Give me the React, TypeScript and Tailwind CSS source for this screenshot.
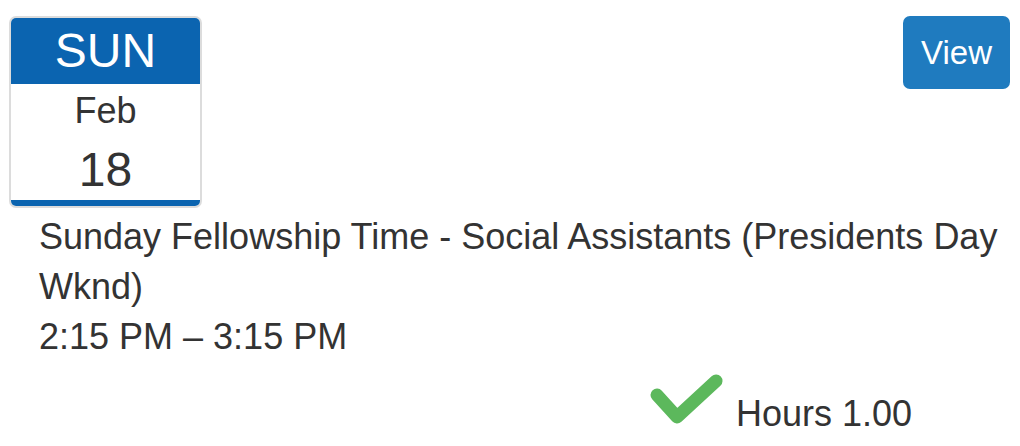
export default function App() {
  return (
    <div
      className="w-[1020px] h-[446px] bg-white text-[#333] overflow-hidden"
      style={{ fontFamily: '"Liberation Sans", Arial, sans-serif' }}
    >
      <div className="flex justify-between items-start pt-[16px] pl-[9px] pr-[10px]">
        <div className="w-[193px] h-[192px] border-[2px] border-[#dcdcdc] rounded-[7px] overflow-hidden flex flex-col">
          <div className="h-[66px] bg-[#0b64b0] text-white text-[48px] leading-[66px] text-center">SUN</div>
          <div className="flex-1 flex flex-col items-center">
            <div className="text-[36px] leading-[36px] mt-[9px]">Feb</div>
            <div className="text-[48px] leading-[48px] mt-[17px]">18</div>
          </div>
          <div className="h-[6px] bg-[#0b64b0]" />
        </div>
        <button className="w-[107px] h-[73px] rounded-[7px] bg-[#1f7bbf] text-white text-[33px]">
          View
        </button>
      </div>
      <div className="pl-[39px] pr-[16px] pt-[4px] text-[36px] leading-[50px]">
        <div>Sunday Fellowship Time - Social Assistants (Presidents Day Wknd)</div>
        <div>2:15 PM – 3:15 PM</div>
      </div>
      <div className="flex items-center pl-[650px] mt-[6px]">
        <svg width="74" height="56" viewBox="0 0 74 56">
          <polyline
            points="7,22 27,44 66,8"
            fill="none"
            stroke="#5cb85c"
            strokeWidth="13"
            strokeLinecap="round"
            strokeLinejoin="round"
          />
        </svg>
        <span className="ml-[12px] mt-[26px] text-[36px] leading-[40px]">Hours 1.00</span>
      </div>
    </div>
  );
}
